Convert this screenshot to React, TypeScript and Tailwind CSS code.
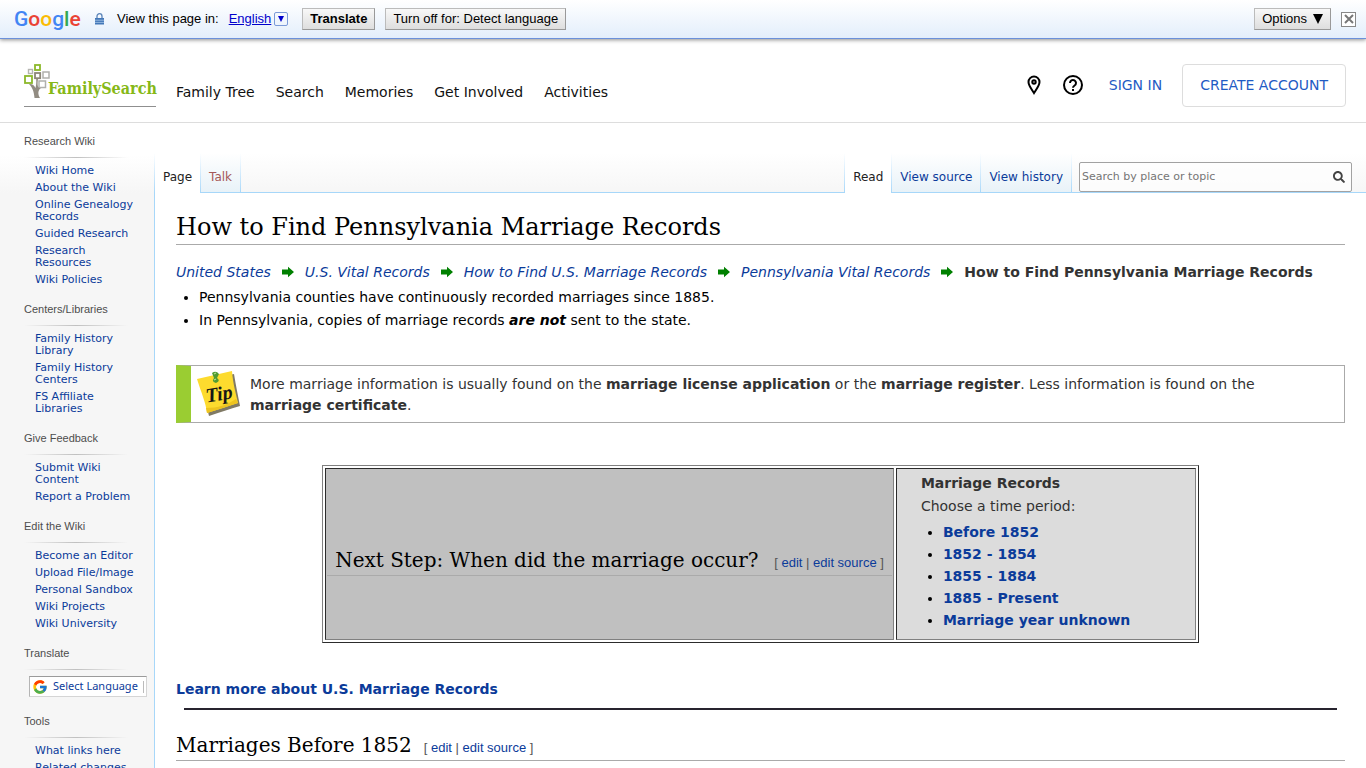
import React from "react";
import { FcGoogle } from "react-icons/fc";
import { FaSearch } from "react-icons/fa";

const sidebarSections = [
  {
    title: "Research Wiki",
    links: ["Wiki Home", "About the Wiki", "Online Genealogy Records", "Guided Research", "Research Resources", "Wiki Policies"],
  },
  { title: "Centers/Libraries", links: ["Family History Library", "Family History Centers", "FS Affiliate Libraries"] },
  { title: "Give Feedback", links: ["Submit Wiki Content", "Report a Problem"] },
  { title: "Edit the Wiki", links: ["Become an Editor", "Upload File/Image", "Personal Sandbox", "Wiki Projects", "Wiki University"] },
  { title: "Translate", links: [] },
  { title: "Tools", links: ["What links here", "Related changes"] },
];

const navItems = ["Family Tree", "Search", "Memories", "Get Involved", "Activities"];

const crumbs = ["United States", "U.S. Vital Records", "How to Find U.S. Marriage Records", "Pennsylvania Vital Records"];

const periods = ["Before 1852", "1852 - 1854", "1855 - 1884", "1885 - Present", "Marriage year unknown"];

const toolbarButton =
  "h-[22px] border border-[#bbb] border-r-[#999] border-b-[#999] bg-gradient-to-b from-[#f8f8f8] to-[#dedede] px-[7px] leading-5";

const TranslateBar = () => (
  <div className="relative z-10 flex h-[39px] items-center border-b border-[#6b90da] bg-gradient-to-b from-white to-[#e3eefb] pr-2.5 pl-3.5 font-['Liberation_Sans',sans-serif] text-[13px] text-black shadow-[0_1px_4px_rgba(0,0,0,0.45)]">
    <div className="w-20 font-[Roboto,sans-serif] text-[21px] leading-8 font-medium">
      <span className="text-[#4285f4]">G</span>
      <span className="text-[#ea4335]">o</span>
      <span className="text-[#fbbc05]">o</span>
      <span className="text-[#4285f4]">g</span>
      <span className="text-[#34a853]">l</span>
      <span className="text-[#ea4335]">e</span>
    </div>
    <svg className="h-3 w-[11px]" viewBox="0 0 11 12">
      <path d="M3 5V3.2a2.5 2.5 0 0 1 5 0V5" fill="none" stroke="#5b84b8" strokeWidth="1.3" />
      <rect x="1" y="5" width="9" height="6.5" fill="#4478b8" />
      <path d="M1 7.2h9M1 9.4h9" stroke="#a9c6e8" strokeWidth="0.8" />
    </svg>
    <span className="ml-3">View this page in:</span>
    <a href="#" className="ml-2.5 text-[#0000cc] underline">English</a>
    <button aria-label="Choose language" className="ml-[3px] flex h-3.5 w-3.5 items-center justify-center rounded-xs border border-[#7b9ad8]">
      <svg className="h-1.5 w-1.5" viewBox="0 0 6 6"><path d="M0 0h6L3 6z" fill="#0000cc" /></svg>
    </button>
    <button className={`${toolbarButton} ml-3.5 font-bold`}>Translate</button>
    <button className={`${toolbarButton} ml-2.5`}>Turn off for: Detect language</button>
    <button className={`${toolbarButton} ml-auto flex items-center gap-1.5`}>
      Options
      <svg className="h-2.5 w-2.5" viewBox="0 0 10 10"><path d="M0 0h10L5 10z" fill="#000" /></svg>
    </button>
    <button aria-label="Close" className="ml-2.5 flex h-[15px] w-[15px] items-center justify-center border border-[#888] bg-white">
      <svg className="h-2.5 w-2.5" viewBox="0 0 10 10"><path d="M1 1l8 8M9 1L1 9" stroke="#777" strokeWidth="2" /></svg>
    </button>
  </div>
);

const Logo = () => (
  <a href="#" className="flex h-[46px] w-[132px] items-start border-b border-[#8f8f8f]">
    <svg className="h-[38px] w-6 shrink-0 overflow-visible" viewBox="0 0 24 38">
      <g fill="none" strokeWidth="1.8">
        <rect x="11" y="4" width="5" height="5" stroke="#8cb82b" />
        <rect x="4.5" y="8.5" width="4" height="4" stroke="#b5b5b0" strokeWidth="1.4" />
        <rect x="11" y="12" width="5.2" height="5.2" stroke="#8d8778" />
        <rect x="19" y="11" width="6" height="6" stroke="#b0b0ac" strokeWidth="1.5" />
        <rect x="1" y="15" width="7" height="7" stroke="#8cb82b" />
        <rect x="15" y="20" width="6.5" height="6.5" stroke="#b0b0ac" strokeWidth="1.5" />
      </g>
      <path d="M5 23C8 26 10 30 10.500 37H16C13.500 33 14 29 17 27C14 27.500 13 25 14 18H12.200C12.500 22 12 25 11.500 27C10 24 8 22.500 5 23Z" fill="#928c82" />
    </svg>
    <span className="mt-[18px] font-['DejaVu_Serif_Condensed','DejaVu_Serif',serif] text-base leading-5 font-bold text-[#86b817]">FamilySearch</span>
  </a>
);

const Header = () => (
  <header className="flex h-[84px] items-center border-b border-[#ddd] pt-1.5 pr-5 pl-6">
    <Logo />
    <nav className="mt-4 ml-5 flex gap-[21px] text-sm text-[#111]">
      {navItems.map((item) => (
        <a key={item} href="#">{item}</a>
      ))}
    </nav>
    <div className="ml-auto flex items-center pt-[3px] text-sm text-[#1f5bc4]">
      <svg className="h-5 w-3.5" viewBox="0 0 14 20" fill="none" stroke="#000" strokeWidth="2">
        <path d="M7 18C4.5 14 1.5 10.5 1.5 7a5.5 5.5 0 0 1 11 0C12.5 10.5 9.500 14 7 18Z" />
        <circle cx="7" cy="7" r="1.7" />
      </svg>
      <svg className="ml-[22px] h-5 w-5" viewBox="0 0 20 20" fill="none" stroke="#000" strokeWidth="2">
        <circle cx="10" cy="10" r="9" />
        <path d="M7 8a3 3 0 1 1 4.600 2.500C10.500 11.300 10 11.700 10 12.800" />
        <path d="M10 14v2" />
      </svg>
      <a href="#" className="ml-[26px]">SIGN IN</a>
      <button className="ml-5 h-[43px] rounded border border-[#ddd] px-[17px]">CREATE ACCOUNT</button>
    </div>
  </header>
);

const Sidebar = () => (
  <aside className="bg-[linear-gradient(#fff_32px,#f6f6f6_70px)] pt-2.5 pr-[7px] pl-6">
    {sidebarSections.map((section) => (
      <div key={section.title} className="mb-2.5">
        <h3 className="font-['Liberation_Sans',sans-serif] text-[11px] leading-4 text-[#4d4d4d]">{section.title}</h3>
        <div className="mt-2 h-px w-[104px] bg-gradient-to-r from-transparent via-[#c0c0c0] to-transparent" />
        {section.title === "Translate" ? (
          <button className="mt-1.5 mb-4 ml-[5px] flex h-[21px] w-[118px] items-center gap-[5px] border border-[#d5d5d5] border-t-[#9b9b9b] border-l-[#b5b5b5] bg-white pl-0.5 text-[11px] whitespace-nowrap text-[#0b3b9a]">
            <FcGoogle className="h-4 w-4 shrink-0" />
            <span className="font-['Noto_Sans',sans-serif]">Select Language</span>
            <span className="h-3 w-px shrink-0 bg-[#bbb]" />
          </button>
        ) : (
          <ul className="w-[110px] pt-[7px] pl-[11px] text-[11px] leading-3">
            {section.links.map((link) => (
              <li key={link} className="pb-[5px]">
                <a href="#" className="text-[#0b3b9a]">{link}</a>
              </li>
            ))}
          </ul>
        )}
      </div>
    ))}
  </aside>
);

// Tab strip separator that fades out towards the top
const TabLine = () => <span className="w-px bg-gradient-to-b from-white to-[#a7d7f9]" />;

const inactiveTab = "flex items-center border-b border-[#a7d7f9] bg-gradient-to-b from-white to-[#e8f2f8] px-2 pt-2";
const activeTab = "flex items-center bg-white px-2 pt-2 text-[#222]";

const Tabs = () => (
  <div className="flex h-10 bg-gradient-to-b from-white to-[#f6f6f6] text-xs">
    <TabLine />
    <a href="#" className={activeTab}>Page</a>
    <TabLine />
    <a href="#" className={`${inactiveTab} text-[#a55858]`}>Talk</a>
    <TabLine />
    <div className="grow border-b border-[#a7d7f9]" />
    <TabLine />
    <a href="#" className={activeTab}>Read</a>
    <TabLine />
    <a href="#" className={`${inactiveTab} text-[#0b3b9a]`}>View source</a>
    <TabLine />
    <a href="#" className={`${inactiveTab} text-[#0b3b9a]`}>View history</a>
    <TabLine />
    <div className="flex items-end border-b border-[#a7d7f9] pr-3.5 pl-[7px]">
      <form className="flex h-[30px] w-[273px] items-center rounded-xs border border-[#a2a2a2] bg-white/60 pr-1.5 pl-0.5">
        <input
          type="text"
          aria-label="Search"
          placeholder="Search by place or topic"
          className="min-w-0 grow text-[11px] outline-none placeholder:text-[#757575]"
        />
        <button type="button" aria-label="Go"><FaSearch className="h-3 w-3 text-[#444]" /></button>
      </form>
    </div>
  </div>
);

const Arrow = () => (
  <svg className="mx-[11px] h-3 w-3 shrink-0" viewBox="0 0 12 12">
    <path d="M0 3.500h6V.8l6 5.200-6 5.200V8.500H0z" fill="#008000" />
  </svg>
);

const EditLinks = () => (
  <span className="font-['Liberation_Sans',sans-serif] text-[13px] leading-4 whitespace-nowrap text-[#555]">
    [ <a href="#" className="text-[#0b3b9a]">edit</a> | <a href="#" className="text-[#0b3b9a]">edit source</a> ]
  </span>
);

// Yellow sticky note with a green pin
const TipNote = () => (
  <svg className="h-12 w-[46px] shrink-0" viewBox="0 0 46 48">
    <path d="M4 10L38 3C40 15 42 25 44 35C34 38 24 41 13 45C10 34 8 22 4 10Z" fill="#554d32" opacity="0.75" />
    <path d="M1 8L36 0C37 13 40 23 42 32C33 35 23 38 11 42C10 32 5 21 1 8Z" fill="#fddb2e" />
    <path d="M11 42C23 38 33 35 42 32L40 28C31 34 22 37 10 37Z" fill="#eec41f" />
    <path d="M16 2Q20 -1 23 3L21 7Q25 10 20 12Q15 11 18 7Z" fill="#4f9b33" />
    <path d="M18 3L20 2M18 9L20 8" stroke="#b4df8b" strokeWidth="1.200" />
    <text x="10" y="30" transform="rotate(-9 20 26)" fontFamily="Liberation Serif, serif" fontSize="20" fontStyle="italic" fontWeight="bold" fill="#161616">Tip</text>
  </svg>
);

const Article = () => (
  <article className="grow border-l border-[#a7d7f9] px-[21px] pt-[17px] text-sm text-black">
    <h1 className="border-b border-[#aaa] font-['DejaVu_Serif',serif] text-2xl leading-[34px]">
      How to Find Pennsylvania Marriage Records
    </h1>
    <div className="mt-4 flex items-center leading-[22px]">
      {crumbs.map((crumb) => (
        <React.Fragment key={crumb}>
          <a href="#" className="whitespace-nowrap text-[#0b3b9a] italic">{crumb}</a>
          <Arrow />
        </React.Fragment>
      ))}
      <b className="whitespace-nowrap text-[#333]">How to Find Pennsylvania Marriage Records</b>
    </div>
    <ul className="mt-[3px] list-disc pl-[23px] leading-[23px]">
      <li>Pennsylvania counties have continuously recorded marriages since 1885.</li>
      <li>In Pennsylvania, copies of marriage records <b><i>are not</i></b> sent to the state.</li>
    </ul>

    <div className="mt-[33px] flex items-center border border-l-[15px] border-[#aaa] border-l-[#9acd32] pt-[5px] pr-4 pb-[3px] pl-[5px] text-[#333]">
      <TipNote />
      <p className="ml-2 leading-[21px]">
        More marriage information is usually found on the <b>marriage license application</b> or the <b>marriage register</b>. Less information is found on the <b>marriage certificate</b>.
      </p>
    </div>

    <table className="mx-auto mt-[42px] w-3/4 border-separate border-spacing-[2px] border border-t-[#808080] border-r-[#2c2c2c] border-b-[#2c2c2c] border-l-[#808080]">
      <tbody>
        <tr>
          <td className="border border-t-[#2c2c2c] border-r-[#808080] border-b-[#808080] border-l-[#2c2c2c] bg-[#c0c0c0] p-px align-middle">
            <h2 className="flex items-baseline justify-between border-b border-[#aaa] px-2 pt-3 font-['DejaVu_Serif',serif] text-xl leading-[30px] whitespace-nowrap">
              Next Step: When did the marriage occur?
              <EditLinks />
            </h2>
          </td>
          <td className="w-[300px] border border-t-[#2c2c2c] border-r-[#808080] border-b-[#808080] border-l-[#2c2c2c] bg-[#dcdcdc] pt-[3px] pb-2 pl-6 text-[#333]">
            <p className="leading-[23px] font-bold">Marriage Records</p>
            <p className="leading-[23px]">Choose a time period:</p>
            <ul className="mt-[3px] list-disc pl-[22px] leading-[22px] font-bold marker:text-black">
              {periods.map((period) => (
                <li key={period}><a href="#" className="text-[#0b3b9a]">{period}</a></li>
              ))}
            </ul>
          </td>
        </tr>
      </tbody>
    </table>

    <p className="mt-[35px] leading-[22px] font-bold"><a href="#" className="text-[#0b3b9a]">Learn more about U.S. Marriage Records</a></p>
    <hr className="mx-2 mt-2 border-t-2 border-[#28242f]" />
    <h2 className="mt-5 flex items-baseline gap-3 border-b border-[#aaa] font-['DejaVu_Serif',serif] text-xl leading-[30px]">
      Marriages Before 1852
      <EditLinks />
    </h2>
  </article>
);

const App = () => (
  <div className="min-h-screen bg-white font-['DejaVu_Sans',Verdana,sans-serif]">
    <TranslateBar />
    <Header />
    <div className="grid grid-cols-[154px_minmax(0,1fr)]">
      <Sidebar />
      <main className="flex flex-col pt-[30px]">
        <Tabs />
        <Article />
      </main>
    </div>
  </div>
);

export default App;
